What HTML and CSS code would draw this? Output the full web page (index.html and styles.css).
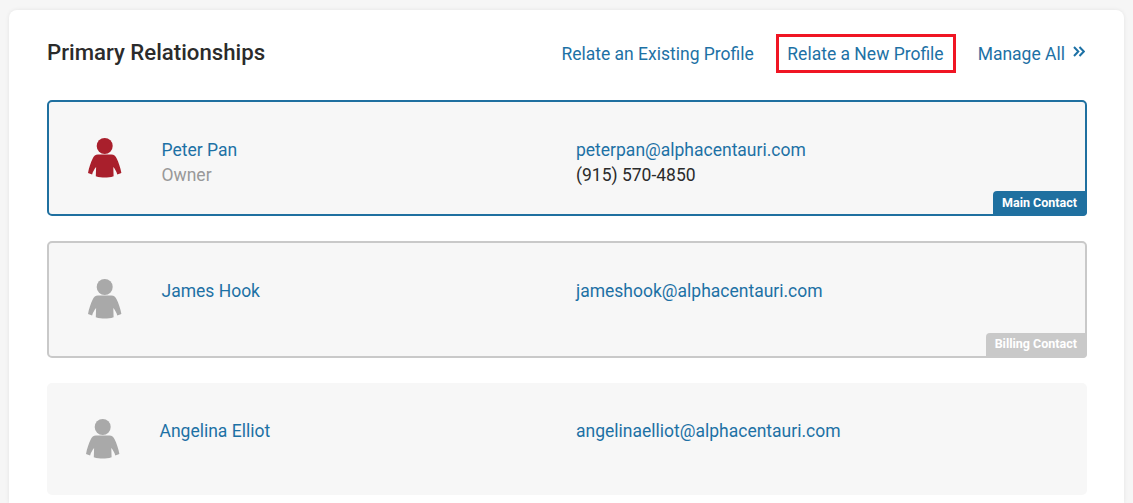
FILE: index.html
```html
<!DOCTYPE html>
<html lang="en">
<head>
<meta charset="utf-8">
<title>Primary Relationships</title>
<link rel="stylesheet" href="styles.css">
</head>
<body>
<svg class="defs" width="0" height="0" aria-hidden="true">
  <symbol id="person" viewBox="0 0 34 40">
    <circle cx="16.700" cy="8" r="8"/>
    <path d="M10 16.600H23.400C26 16.600 27.500 18 28.700 20.500C30.500 24 32.500 30 33.400 35L29.300 36.500C28.500 33.500 27 31 25.300 29L25.600 38.300C22.500 39.300 19.500 39.600 16.700 39.600C14 39.600 11 39.300 7.800 38.300L8.100 29C6.400 31 4.900 33.500 4.100 36.500L0 35C0.900 30 2.900 24 4.700 20.500C5.900 18 7.400 16.600 10 16.600Z"/>
  </symbol>
</svg>
<main class="card">
  <header class="head">
    <h1 class="title">Primary Relationships</h1>
    <nav class="actions">
      <a class="action">Relate an Existing Profile</a>
      <a class="action action-hl">Relate a New Profile</a>
      <a class="action action-manage">Manage All
        <svg class="chev" viewBox="0 0 12 11" width="12" height="11"><path d="M1 1l4.300 4.500L1 10M6.500 1l4.300 4.500L6.500 10"/></svg>
      </a>
    </nav>
  </header>
  <section class="row row-main">
    <div class="who">
      <svg class="avatar avatar-red"><use href="#person"/></svg>
      <div>
        <a class="link">Peter Pan</a>
        <div class="role">Owner</div>
      </div>
    </div>
    <div class="contact">
      <a class="link">peterpan@alphacentauri.com</a>
      <div class="phone">(915) 570-4850</div>
    </div>
    <span class="badge badge-main">Main Contact</span>
  </section>
  <section class="row row-billing">
    <div class="who">
      <svg class="avatar"><use href="#person"/></svg>
      <div><a class="link">James Hook</a></div>
    </div>
    <div class="contact"><a class="link">jameshook@alphacentauri.com</a></div>
    <span class="badge badge-billing">Billing Contact</span>
  </section>
  <section class="row row-plain">
    <div class="who">
      <svg class="avatar"><use href="#person"/></svg>
      <div><a class="link">Angelina Elliot</a></div>
    </div>
    <div class="contact"><a class="link">angelinaelliot@alphacentauri.com</a></div>
  </section>
</main>
</body>
</html>
```
FILE: styles.css
```css
* { box-sizing: border-box; }
html, body { height: 100%; }
body {
  margin: 0;
  padding: 10px 9px 0;
  background: #f6f6f6;
  font-family: Roboto, "Liberation Sans", sans-serif;
  overflow: hidden;
}
.defs { position: absolute; }
.card {
  background: #fff;
  border-radius: 8px 8px 0 0;
  box-shadow: 0 0 4px rgba(0,0,0,.08);
  padding: 0 37px 0 38px;
  height: 493px;
  overflow: hidden;
}
.head {
  display: flex;
  justify-content: space-between;
  align-items: center;
  height: 90px;
  padding-bottom: 3px;
}
.title {
  margin: 0 0 4px;
  font-size: 22.2px;
  font-weight: 500;
  color: #2b2b2b;
}
.actions { display: flex; align-items: center; }
.action {
  color: #1d71a5;
  font-size: 17.5px;
  line-height: 22px;
}
.action-hl {
  border: 3px solid #f01523;
  padding: 5.5px 9px 5.5px 8.5px;
  margin: 0 22px;
}
.action-manage { display: flex; align-items: center; gap: 8px; margin-right: 2px; }
.chev { fill: none; stroke: #1d71a5; stroke-width: 2; margin-top: -5px; }
.row {
  position: relative;
  display: flex;
  background: #f7f7f7;
  border-radius: 5px;
  margin-bottom: 25px;
  font-size: 17.5px;
  line-height: 25px;
}
.row-main { border: 2px solid #1f70a0; height: 116px; padding-top: 36px; }
.row-billing { border: 2px solid #c9c9c9; height: 117px; padding-top: 36px; }
.row-plain { height: 112px; padding-top: 36px; }
.who { display: flex; flex: 0 0 50.87%; padding-left: 39px; }
.avatar { width: 34px; height: 40px; fill: #a9a9a9; margin: 0 39.500px 0 0; flex: none; }
.avatar-red { fill: #a91f2c; }
.link { color: #1d71a5; }
.role { color: #999; }
.phone { color: #2b2b2b; }
.badge {
  position: absolute;
  right: -2px;
  bottom: -2px;
  height: 25px;
  padding: 0 10px 0 9px;
  border-radius: 4px 0 4px 0;
  color: #fff;
  font-size: 12.5px;
  font-weight: 700;
  line-height: 24px;
}
.badge-main { background: #1f70a0; }
.badge-billing { background: #c9c9c9; line-height: 22px; }
```
